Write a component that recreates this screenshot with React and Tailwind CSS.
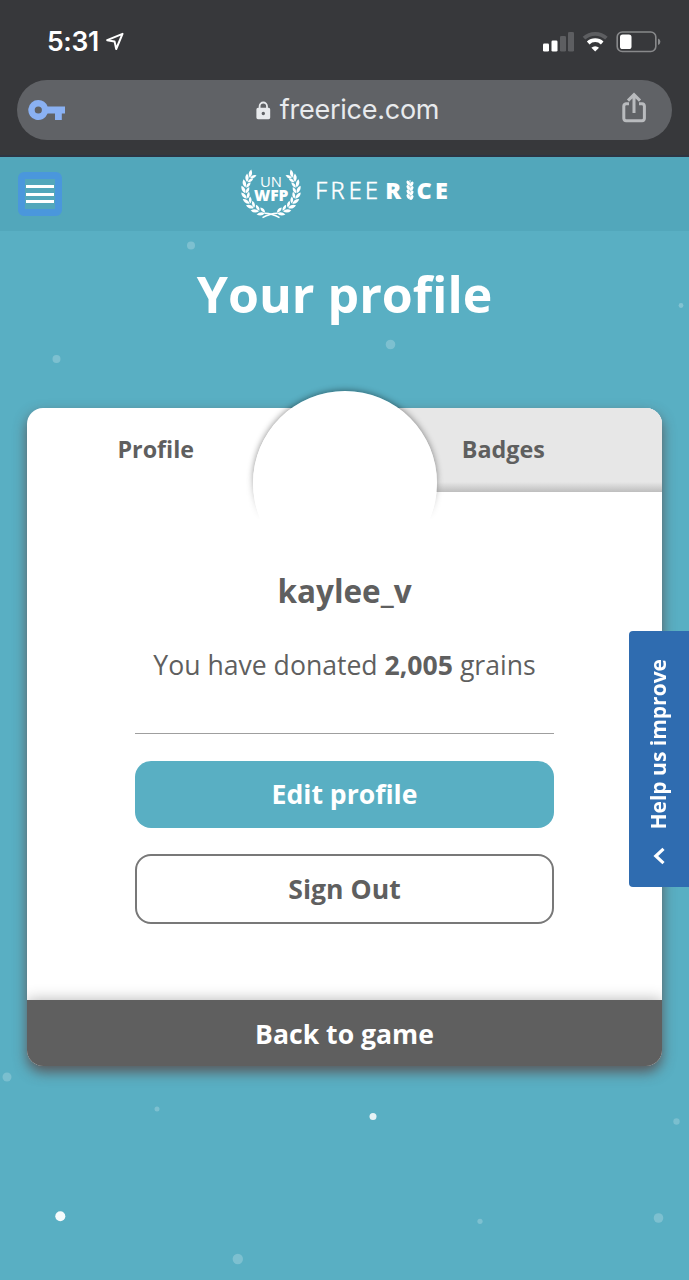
const DOTS = [
    { x: 191, y: 245.5, r: 4, o: 0.22 },
    { x: 56.5, y: 359, r: 4, o: 0.22 },
    { x: 390.5, y: 344.5, r: 4.8, o: 0.22 },
    { x: 681, y: 305.5, r: 2.4, o: 0.25 },
    { x: 7, y: 1077, r: 4.5, o: 0.2 },
    { x: 157, y: 1109, r: 2.5, o: 0.22 },
    { x: 373, y: 1116.5, r: 3.5, o: 0.85 },
    { x: 676.5, y: 1121.5, r: 3.2, o: 0.2 },
    { x: 60.3, y: 1216.3, r: 5, o: 0.95 },
    { x: 480, y: 1221.3, r: 2.6, o: 0.22 },
    { x: 658.5, y: 1218, r: 4.8, o: 0.22 },
    { x: 237.8, y: 1259, r: 5.2, o: 0.22 },
];

const Background = () => (
    <svg className="absolute inset-0" width="689" height="1280" fill="#fff">
        {DOTS.map((d) => (
            <circle key={`${d.x}-${d.y}`} cx={d.x} cy={d.y} r={d.r} opacity={d.o} />
        ))}
    </svg>
);

const StatusBar = () => (
    <div className="flex h-20 items-center justify-between pt-[3px] pr-7 pl-[47px] text-white">
        <div className="flex items-center gap-[7px]">
            <span className="font-['Inter'] text-[26.5px] leading-none font-semibold tracking-[-0.3px]">5:31</span>
            <svg width="18" height="19" viewBox="0 0 18 19" fill="none" stroke="#fff" strokeWidth="2" strokeLinejoin="round">
                <path d="M16.5 1.8 L1.2 8.2 L8.6 9.6 L10.2 17 Z" />
            </svg>
        </div>
        <svg width="118" height="22" viewBox="0 0 118 22" fill="none">
            <rect x="0" y="12.5" width="6" height="8" rx="1.3" fill="#fff" />
            <rect x="8.5" y="9.5" width="6" height="11" rx="1.3" fill="#fff" />
            <rect x="17" y="5" width="6" height="15.5" rx="1.3" fill="#5d5e61" />
            <rect x="25" y="1" width="6" height="19.5" rx="1.3" fill="#5d5e61" />
            <path d="M41 7.2 A16.4 16.4 0 0 1 63.4 7.2" stroke="#5d5e61" strokeWidth="3.8" />
            <path d="M45.2 12 A10.2 10.2 0 0 1 59.2 12" stroke="#fff" strokeWidth="3.8" />
            <path d="M52.2 20.6 L48.4 16.8 A5.4 5.4 0 0 1 56 16.8 Z" fill="#fff" />
            <rect x="74.2" y="1" width="38.6" height="19.5" rx="5" stroke="#88898b" strokeWidth="1.6" />
            <rect x="77" y="3.5" width="11.5" height="14.5" rx="2.6" fill="#fff" />
            <path d="M115 7.6 Q117.4 8.4 117.4 10.8 Q117.4 13.2 115 14 Z" fill="#88898b" />
        </svg>
    </div>
);

const AddressBar = () => (
    <div className="mx-[17px] flex h-[60px] items-center justify-between rounded-full bg-[#606266] pr-[25px] pl-[11px]">
        <svg width="38" height="22" viewBox="0 0 38 22" fill="#8ab1f3">
            <path
                fillRule="evenodd"
                d="M10.3 1 A10 10 0 1 0 19.6 14.6 H27 V21 H33.8 V14.6 H37 V7.6 H19.6 A10 10 0 0 0 10.3 1 Z M10.3 7.4 A3.6 3.6 0 1 1 10.3 14.6 A3.6 3.6 0 1 1 10.3 7.4 Z"
            />
        </svg>
        <div className="flex items-center gap-[9px] pb-0.5 pl-[8px] text-[#e8eaed]">
            <svg width="15" height="19" viewBox="0 0 15 19" fill="none" className="mt-0.5">
                <path d="M3.6 8 V5.2 A3.7 3.7 0 0 1 11 5.2 V8" stroke="#e8eaed" strokeWidth="1.8" />
                <path
                    fillRule="evenodd"
                    fill="#e8eaed"
                    d="M2 6.8 H12.6 A1.6 1.6 0 0 1 14.2 8.4 V16.6 A1.6 1.6 0 0 1 12.6 18.2 H2 A1.6 1.6 0 0 1 0.4 16.6 V8.4 A1.6 1.6 0 0 1 2 6.8 Z M7.3 10.8 A1.7 1.7 0 1 0 7.3 14.2 A1.7 1.7 0 1 0 7.3 10.8 Z"
                />
            </svg>
            <span className="font-['Inter'] text-[27px] leading-none tracking-[-0.25px]">freerice.com</span>
        </div>
        <svg width="26" height="32" viewBox="0 0 26 32" fill="none" stroke="#b9bbbe" strokeWidth="3" className="-mt-1">
            <path d="M8 11.8 H5 A2.6 2.6 0 0 0 2.8 14.2 V26.4 A2.6 2.6 0 0 0 5.2 28.8 H21 A2.6 2.6 0 0 0 23.4 26.4 V14.2 A2.6 2.6 0 0 0 21 11.8 H18" />
            <path d="M13 21 V4 M7 8.6 L13 2.6 L19 8.6" />
        </svg>
    </div>
);

const LEAF_ANGLES = [104, 118, 132, 146, 160, 174, 188, 202, 214];

const Branch = () => (
    <g>
        {LEAF_ANGLES.map((a) => {
            const rad = (a * Math.PI) / 180;
            const x = 32 + 25.4 * Math.cos(rad);
            const y = 24.6 + 23 * Math.sin(rad);
            return (
                <g key={a} transform={`translate(${x} ${y}) rotate(${a + 180})`}>
                    <path d="M0 0 Q3.2 -4 0 -8.4 Q-3.4 -4 0 0 Z" transform="rotate(-22) translate(-0.4 0)" />
                    <path d="M0 0 Q2.8 -3.4 0 -7 Q-2.8 -3.4 0 0 Z" transform="rotate(32) translate(0.4 0)" />
                </g>
            );
        })}
        <path d="M40.5 51.6 Q33 47.4 25.5 47.2" fill="none" stroke="#fff" strokeWidth="1.6" />
    </g>
);

const Logo = () => (
    <svg width="212" height="56" viewBox="0 0 212 56" fill="#fff" className="font-['Open_Sans']">
        <Branch />
        <g transform="translate(64 0) scale(-1 1)">
            <Branch />
        </g>
        <text x="32" y="21.2" fontSize="14.8" textAnchor="middle">UN</text>
        <text x="32.2" y="35" fontSize="15.6" fontWeight="800" textAnchor="middle">WFP</text>
        <text y="33" fontSize="23.5" fontWeight="300" stroke="#fff" strokeWidth="0.6" x="76.2 91.6 109.8 126">FREE</text>
        <text y="33" fontSize="23.5" fontWeight="800" x="146.2">R</text>
        <text y="33" fontSize="23.5" fontWeight="800" x="177.6 196">CE</text>
        <g transform="translate(171 -1)">
            {[17, 21.5, 26, 30.5].map((y) => (
                <g key={y}>
                    <ellipse cx="-1.7" cy={y + 1} rx="1.5" ry="2.6" transform={`rotate(-28 -1.7 ${y + 1})`} />
                    <ellipse cx="1.7" cy={y + 2} rx="1.5" ry="2.6" transform={`rotate(28 1.7 ${y + 2})`} />
                </g>
            ))}
            <path d="M0 15 V35" stroke="#fff" strokeWidth="0.8" />
        </g>
    </svg>
);

const Header = () => (
    <header className="relative flex h-[74px] items-center justify-center bg-[#52a7bb]">
        <button className="absolute top-[15px] left-[18px] flex h-[44px] w-[44px] flex-col items-center justify-center gap-[4.5px] rounded-[6px] border-[7px] border-[#4a97dc]">
            <span className="h-[3px] w-7 shrink-0 bg-white" />
            <span className="h-[3px] w-7 shrink-0 bg-white" />
            <span className="h-[3px] w-7 shrink-0 bg-white" />
        </button>
        <Logo />
    </header>
);

const Avatar = () => (
    <div className="absolute -top-[27px] left-1/2 z-10 h-[204px] w-[204px] -translate-x-1/2">
        {/* the shadow fades out over the lower half */}
        <div className="h-full mask-[linear-gradient(#000_45%,transparent_68%)] p-[10px]">
            <div className="h-full rounded-full shadow-[0_-1px_6px_rgba(0,0,0,0.42)]" />
        </div>
        <div className="absolute inset-[10px] rounded-full bg-white" />
    </div>
);

const ProfileCard = () => (
    <main className="relative mx-[27px] mt-[77px] h-[658px]">
        <Avatar />
        <div className="flex h-full flex-col overflow-hidden rounded-2xl bg-white text-[#5f5f5f] shadow-[0_6px_13px_rgba(90,72,72,0.85)]">
            <nav className="flex h-[84px] shrink-0 text-[23.3px] font-bold">
                <a className="flex w-1/2 items-center justify-center pr-[60px] pb-0.5">Profile</a>
                <a className="flex w-1/2 items-center justify-center bg-[#e7e7e7] bg-[linear-gradient(to_top,#bebebe,#e7e7e7_10px)] pb-0.5">
                    Badges
                </a>
            </nav>
            <section className="flex flex-1 flex-col items-center px-[108px]">
                <h2 className="mt-[76px] text-[31.5px] leading-[46px] font-bold">kaylee_v</h2>
                <p className="mt-[32.5px] text-[26.6px] leading-[36px] whitespace-nowrap">
                    You have donated <b>2,005</b> grains
                </p>
                <hr className="mt-[50px] w-full border-t-[1.5px] border-[#9f9f9f]" />
                <button className="mt-[27px] h-[67px] w-full rounded-2xl bg-[#59afc3] pt-px text-[26.6px] font-bold text-white">
                    Edit profile
                </button>
                <button className="mt-[26px] h-[70px] w-full rounded-2xl border-2 border-[#787878] pt-[3px] text-[26.6px] font-bold">
                    Sign Out
                </button>
            </section>
            <button className="h-[66px] shrink-0 bg-[#5f5f5f] pt-[3px] text-[26.6px] font-bold text-white shadow-[0_0_14px_rgba(0,0,0,0.3)]">
                Back to game
            </button>
        </div>
    </main>
);

const FeedbackTab = () => (
    <button className="absolute top-[631px] right-0 z-20 flex h-[256px] w-[60px] flex-col items-center justify-end gap-[17px] rounded-l-[4px] bg-[#2f6cb0] pb-[22px] text-white">
        <span className="mr-[3px] rotate-180 text-[21px] leading-[28px] font-bold whitespace-nowrap [writing-mode:vertical-rl]">
            Help us improve
        </span>
        <svg width="12" height="18" viewBox="0 0 12 18" fill="none" stroke="#fff" strokeWidth="3.2">
            <path d="M10.5 1.8 L2.8 9 L10.5 16.2" />
        </svg>
    </button>
);

export default function App() {
    return (
        <div className="relative h-[1280px] w-[689px] overflow-hidden bg-[#59afc3] font-['Open_Sans',sans-serif]">
            <Background />
            <div className="relative h-[157px] border-b-2 border-[#2d3543] bg-[#37383b]">
                <StatusBar />
                <AddressBar />
            </div>
            <Header />
            <h1 className="relative mt-[27px] text-center text-[50px] leading-[73px] font-bold text-white">Your profile</h1>
            <ProfileCard />
            <FeedbackTab />
        </div>
    );
}
